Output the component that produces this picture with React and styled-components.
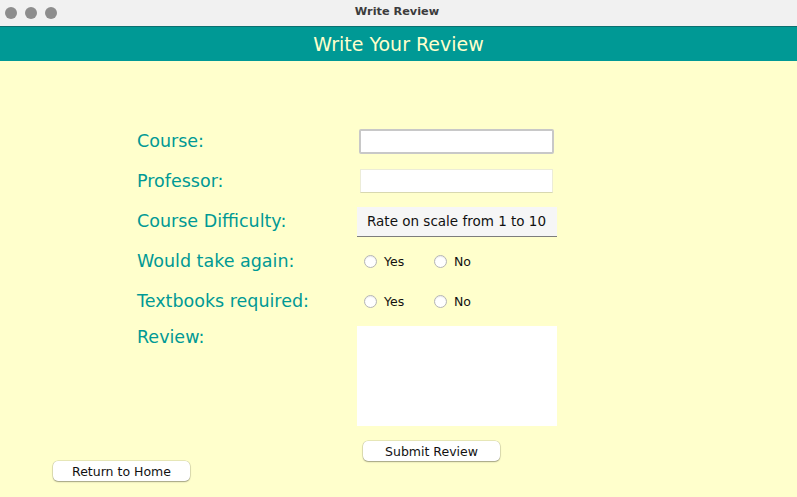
import React from "react";
import styled, { createGlobalStyle } from "styled-components";

const Global = createGlobalStyle`
  html, body { margin: 0; padding: 0; background: #ffffcc; }
  body { font-family: "DejaVu Sans", "Liberation Sans", sans-serif; }
  * { box-sizing: border-box; }
`;

const Window = styled.div`
  width: 797px;
  height: 497px;
  display: flex;
  flex-direction: column;
  background: #ffffcc;
  overflow: hidden;
`;

const TitleBar = styled.div`
  height: 27px;
  flex: none;
  background: #f1f1f1;
  border-bottom: 1px solid #0b6f70;
  display: flex;
  align-items: center;
  position: relative;
`;

const Lights = styled.div`
  display: flex;
  gap: 8px;
  padding-left: 5px;
`;

const Light = styled.span`
  width: 12px;
  height: 12px;
  border-radius: 50%;
  background: #8d8d8d;
`;

const WinTitle = styled.div`
  position: absolute;
  left: 0;
  right: 3px;
  top: 5px;
  text-align: center;
  font-size: 11.3px;
  font-weight: bold;
  color: #3c3c3c;
`;

const Header = styled.div`
  height: 34px;
  flex: none;
  background: #009995;
  color: #ffffcc;
  font-size: 19px;
  display: flex;
  align-items: center;
  justify-content: center;
  padding-bottom: 1px;
`;

const Body = styled.div`
  flex: 1;
  display: flex;
  flex-direction: column;
  padding-top: 60px;
`;

const FormGrid = styled.div`
  margin-left: 137px;
  display: grid;
  grid-template-columns: 220px 200px;
  grid-template-rows: repeat(5, 40px) auto;
  align-items: center;
`;

const Label = styled.div`
  color: #009995;
  font-size: 17.5px;
  align-self: ${(p) => (p.$top ? "start" : "center")};
  padding-top: ${(p) => (p.$top ? "6px" : "0")};
`;

const TextField = styled.div`
  height: ${(p) => (p.$focused ? "25px" : "24px")};
  margin: ${(p) => (p.$focused ? "0 3px 0 2px" : "0 4px 0 3px")};
  background: #fff;
  border: ${(p) => (p.$focused ? "2px solid #c8c8c8" : "1px solid #ececd8")};
  border-bottom-color: ${(p) => (p.$focused ? "#c8c8c8" : "#d8d8b0")};
  border-radius: ${(p) => (p.$focused ? "2px" : "0")};
`;

const Placeholder = styled.div`
  height: 30px;
  background: #f6f6f6;
  border-bottom: 1px solid #7d7d7d;
  font-size: 13.5px;
  color: #111;
  display: flex;
  align-items: center;
  padding-left: 10px;
  margin-top: 1px;
  white-space: nowrap;
`;

const RadioGroup = styled.div`
  display: flex;
  align-items: center;
  padding-left: 7px;
`;

const RadioOption = styled.label`
  display: flex;
  align-items: center;
  gap: 7px;
  width: 70px;
  font-size: 12.5px;
  color: #111;
`;

const Circle = styled.span`
  width: 13px;
  height: 13px;
  border-radius: 50%;
  background: #fff;
  border: 1px solid #b5b5b5;
  box-shadow: inset 0 1px 1px rgba(0, 0, 0, 0.08);
`;

const TextArea = styled.div`
  height: 100px;
  background: #fff;
  align-self: start;
  margin-top: 5px;
`;

const Btn = styled.button`
  width: 137px;
  height: 20px;
  background: #fff;
  border: none;
  border-radius: 5px;
  box-shadow: 0 0 0 0.5px rgba(0, 0, 0, 0.18), 0 1px 1.5px rgba(0, 0, 0, 0.3);
  font-family: "DejaVu Sans", sans-serif;
  font-size: 12.5px;
  color: #111;
  padding: 0;
  margin-left: ${(p) => p.$left}px;
`;

const SubmitRow = styled.div`
  display: flex;
  margin-top: 15px;
`;

const Radio = ({ label }) => (
  <RadioOption>
    <Circle />
    {label}
  </RadioOption>
);

export default function App() {
  return (
    <Window>
      <Global />
      <TitleBar>
        <Lights>
          <Light />
          <Light />
          <Light />
        </Lights>
        <WinTitle>Write Review</WinTitle>
      </TitleBar>
      <Header>Write Your Review</Header>
      <Body>
        <FormGrid>
          <Label>Course:</Label>
          <TextField $focused />
          <Label>Professor:</Label>
          <TextField />
          <Label>Course Difficulty:</Label>
          <Placeholder>Rate on scale from 1 to 10</Placeholder>
          <Label>Would take again:</Label>
          <RadioGroup>
            <Radio label="Yes" />
            <Radio label="No" />
          </RadioGroup>
          <Label>Textbooks required:</Label>
          <RadioGroup>
            <Radio label="Yes" />
            <Radio label="No" />
          </RadioGroup>
          <Label $top>Review:</Label>
          <TextArea />
        </FormGrid>
        <SubmitRow>
          <Btn $left={363}>Submit Review</Btn>
        </SubmitRow>
        <Btn $left={53}>Return to Home</Btn>
      </Body>
    </Window>
  );
}
